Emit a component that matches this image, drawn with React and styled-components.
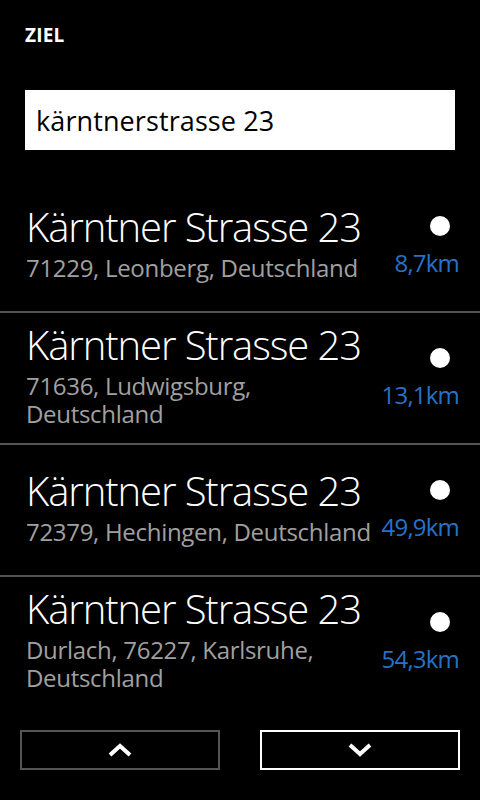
import React from "react";
import styled, { createGlobalStyle } from "styled-components";

const GlobalStyle = createGlobalStyle`
  html, body {
    margin: 0;
    padding: 0;
    background: #000;
  }
  body {
    font-family: "Open Sans", "Noto Sans", sans-serif;
    color: #fff;
  }
`;

const RESULTS = [
  { street: "Kärntner Strasse 23", place: "71229, Leonberg, Deutschland", distance: "8,7km" },
  { street: "Kärntner Strasse 23", place: "71636, Ludwigsburg, Deutschland", distance: "13,1km" },
  { street: "Kärntner Strasse 23", place: "72379, Hechingen, Deutschland", distance: "49,9km" },
  { street: "Kärntner Strasse 23", place: "Durlach, 76227, Karlsruhe, Deutschland", distance: "54,3km" }
];

const Screen = styled.div`
  width: 480px;
  height: 800px;
  background: #000;
  display: flex;
  flex-direction: column;
  overflow: hidden;
`;

const Header = styled.h1`
  margin: 0;
  padding: 23px 25px 0;
  font-size: 19px;
  line-height: 24px;
  font-weight: 700;
  letter-spacing: 0.2px;
`;

const SearchBox = styled.div`
  margin: 43px 25px 0;
  height: 60px;
  background: #fff;
  color: #000;
  display: flex;
  align-items: center;
  padding: 0 11px;
  font-size: 27px;
  letter-spacing: 0.1px;
`;

const List = styled.div`
  margin-top: 31px;
  display: flex;
  flex-direction: column;
`;

const Row = styled.div`
  height: 130px;
  display: flex;
  align-items: center;
  padding: 0 21px 0 26px;
  border-bottom: 2px solid ${p => (p.$last ? "transparent" : "#555")};
`;

const Texts = styled.div`
  flex: 1;
  min-width: 0;
  display: flex;
  flex-direction: column;
  margin-top: -4px;
`;

const Street = styled.div`
  font-size: 40px;
  font-weight: 300;
  line-height: 40px;
  letter-spacing: -1.1px;
  white-space: nowrap;
  margin-bottom: 7px;
`;

const Place = styled.div`
  font-size: 24px;
  line-height: 28px;
  color: #a0a0a0;
  letter-spacing: -0.3px;
`;

const Side = styled.div`
  display: flex;
  flex-direction: column;
  align-items: flex-end;
  gap: 13px;
`;

const Dot = styled.span`
  width: 20px;
  height: 20px;
  border-radius: 50%;
  background: #fff;
  margin-right: 9px;
`;

const Distance = styled.div`
  font-size: 24px;
  line-height: 27px;
  color: #2672c8;
  letter-spacing: -0.8px;
  white-space: nowrap;
`;

const Pager = styled.div`
  margin-top: auto;
  margin-bottom: 30px;
  padding: 0 20px;
  display: flex;
  justify-content: space-between;
`;

const PageButton = styled.button`
  width: 200px;
  height: 40px;
  box-sizing: border-box;
  background: #000;
  border: 2px solid ${p => (p.$active ? "#fff" : "#555")};
  display: flex;
  align-items: center;
  justify-content: center;
  padding: 0;
`;

const Chevron = ({ up }) => (
  <svg width="24" height="14" viewBox="0 0 24 14">
    <polyline
      points={up ? "2,12 12,3 22,12" : "2,2 12,11 22,2"}
      fill="none"
      stroke="#fff"
      strokeWidth="4"
    />
  </svg>
);

const ResultRow = ({ item, last }) => (
  <Row $last={last}>
    <Texts>
      <Street>{item.street}</Street>
      <Place>{item.place}</Place>
    </Texts>
    <Side>
      <Dot />
      <Distance>{item.distance}</Distance>
    </Side>
  </Row>
);

const App = () => (
  <Screen>
    <GlobalStyle />
    <Header>ZIEL</Header>
    <SearchBox>kärntnerstrasse 23</SearchBox>
    <List>
      {RESULTS.map((r, i) => (
        <ResultRow key={i} item={r} last={i === RESULTS.length - 1} />
      ))}
    </List>
    <Pager>
      <PageButton>
        <Chevron up />
      </PageButton>
      <PageButton $active>
        <Chevron />
      </PageButton>
    </Pager>
  </Screen>
);

export default App;
